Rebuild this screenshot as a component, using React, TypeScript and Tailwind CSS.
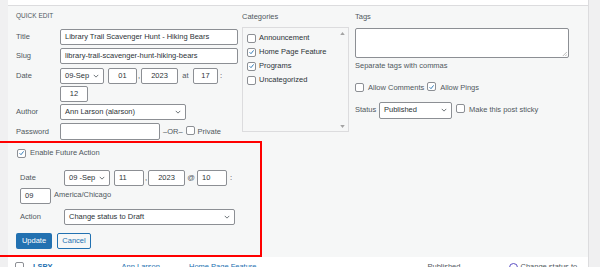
import React from 'react'

type BoxProps = { value?: string; w: string; center?: boolean; h?: string }

function Check({ checked = false }: { checked?: boolean }) {
  return (
    <span className="inline-flex h-[9px] w-[9px] shrink-0 items-center justify-center rounded-[2px] border border-[#8c8f94] bg-white">
      {checked && (
        <svg viewBox="0 0 10 10" className="h-[8px] w-[8px]">
          <path d="M2.2 5.3 L4.3 7.4 L8 2.7" fill="none" stroke="#2271b1" strokeWidth="1.3" />
        </svg>
      )}
    </span>
  )
}

function Input({ value = '', w, center = false, h = 'h-[16px]' }: BoxProps) {
  return (
    <span
      className={`${w} ${h} inline-flex shrink-0 items-center rounded-[2px] border border-[#8c8f94] bg-white px-[4px] text-[#2c3338] ${
        center ? 'justify-center' : ''
      }`}
    >
      {value}
    </span>
  )
}

function Select({ value, w, h = 'h-[16px]' }: BoxProps) {
  return (
    <span
      className={`${w} ${h} inline-flex shrink-0 items-center justify-between rounded-[2px] border border-[#8c8f94] bg-white pl-[4px] pr-[4px] text-[#2c3338]`}
    >
      <span className="whitespace-nowrap">{value}</span>
      <svg viewBox="0 0 8 5" className="h-[4px] w-[6px]">
        <path d="M1 1 L4 4 L7 1" fill="none" stroke="#50575e" strokeWidth="1.1" />
      </svg>
    </span>
  )
}

function Row({ label, children, lw = 'w-[44px]' }: { label: string; children: React.ReactNode; lw?: string }) {
  return (
    <div className="flex items-center">
      <span className={`${lw} shrink-0 text-[#50575e]`}>{label}</span>
      {children}
    </div>
  )
}

const categories: [string, boolean][] = [
  ['Announcement', false],
  ['Home Page Feature', true],
  ['Programs', true],
  ['Uncategorized', false],
]

export default function App() {
  return (
    <div className="relative h-[267px] w-[600px] overflow-hidden bg-[#f0f0f1] font-['Liberation_Sans',Arial,sans-serif] text-[7.5px] leading-[10px] text-[#2c3338]">
      <div className="ml-[8px] w-[581px] border-r border-[#dcdcde] bg-white">
        {/* previous row */}
        <div className="h-[6px] border-b border-[#dcdcde] bg-white" />

        {/* quick edit panel */}
        <div className="h-[251px] bg-[#f6f7f7] px-[8px]">
          <div className="flex items-start">
            {/* left column */}
            <div className="w-[222px] pt-[5px]">
              <div className="h-[10px] text-[6.5px] uppercase text-[#50575e]">Quick Edit</div>
              <div className="mt-[8px]">
                <Row label="Title">
                  <Input w="w-[178px]" value="Library Trail Scavenger Hunt - Hiking Bears" />
                </Row>
              </div>
              <div className="mt-[3px]">
                <Row label="Slug">
                  <Input w="w-[178px]" value="library-trail-scavenger-hunt-hiking-bears" />
                </Row>
              </div>
              <div className="mt-[4px]">
                <Row label="Date">
                  <Select w="w-[44px]" value="09-Sep" />
                  <span className="ml-[4px]">
                    <Input w="w-[29px]" value="01" center />
                  </span>
                  <span className="w-[4px] text-center">,</span>
                  <Input w="w-[37px]" value="2023" center />
                  <span className="w-[15px] text-center text-[#50575e]">at</span>
                  <Input w="w-[25px]" value="17" center />
                  <span className="ml-[2px]">:</span>
                </Row>
              </div>
              <div className="mt-[2px] pl-[44px]">
                <Input w="w-[28px]" value="12" center />
              </div>
              <div className="mt-[2px]">
                <Row label="Author">
                  <Select w="w-[126px]" value="Ann Larson (alarson)" />
                </Row>
              </div>
              <div className="mt-[3px]">
                <Row label="Password">
                  <Input w="w-[100px]" h="h-[17px]" />
                  <span className="ml-[3px] text-[#50575e]">–OR–</span>
                  <span className="ml-[3px]">
                    <Check />
                  </span>
                  <span className="ml-[3px] text-[#50575e]">Private</span>
                </Row>
              </div>
            </div>

            {/* categories */}
            <div className="ml-[4px] w-[107px] pt-[6px]">
              <div className="h-[10px] text-[#50575e]">Categories</div>
              <div className="relative mt-[5px] h-[105px] border border-[#dcdcde] bg-[#f6f7f7] pl-[4px] pt-[3px]">
                {categories.map(([name, on]) => (
                  <div key={name} className="flex h-[14px] items-center gap-[3px]">
                    <Check checked={on} />
                    <span>{name}</span>
                  </div>
                ))}
                <svg viewBox="0 0 6 4" className="absolute right-[3px] top-[4px] h-[3px] w-[5px]">
                  <path d="M0 4 L3 0 L6 4 Z" fill="#a3a3a3" />
                </svg>
                <svg viewBox="0 0 6 4" className="absolute bottom-[3px] right-[3px] h-[3px] w-[5px]">
                  <path d="M0 0 L3 4 L6 0 Z" fill="#a3a3a3" />
                </svg>
              </div>
            </div>

            {/* tags */}
            <div className="ml-[6px] w-[214px] pt-[6px]">
              <div className="h-[10px] text-[#50575e]">Tags</div>
              <div className="relative mt-[6px] h-[30px] rounded-[2px] border border-[#8c8f94] bg-white">
                <svg viewBox="0 0 6 6" className="absolute bottom-[1px] right-[1px] h-[5px] w-[5px]">
                  <path d="M6 1 L1 6 M6 4 L4 6" stroke="#9a9a9a" strokeWidth="0.8" />
                </svg>
              </div>
              <div className="mt-[3px] text-[#50575e]">Separate tags with commas</div>
              <div className="mt-[11px] flex items-center">
                <Check />
                <span className="ml-[4px] text-[#50575e]">Allow Comments</span>
                <span className="ml-[3px]">
                  <Check checked />
                </span>
                <span className="ml-[4px] text-[#50575e]">Allow Pings</span>
              </div>
              <div className="mt-[8px] flex items-center">
                <span className="w-[24px] text-[#50575e]">Status</span>
                <Select w="w-[73px]" h="h-[17px]" value="Published" />
                <span className="ml-[4px]">
                  <Check />
                </span>
                <span className="ml-[4px] text-[#50575e]">Make this post sticky</span>
              </div>
            </div>
          </div>

          {/* future action */}
          <div className="mt-[8px] pl-[1px]">
            <div className="flex h-[10px] items-center">
              <Check checked />
              <span className="ml-[4px] text-[#50575e]">Enable Future Action</span>
            </div>
          </div>
          <div className="mt-[12px] pl-[4px]">
            <Row label="Date">
              <Select w="w-[46px]" value="09 -Sep" />
              <span className="ml-[4px]">
                <Input w="w-[30px]" value="11" />
              </span>
              <span className="w-[4px] text-center">,</span>
              <Input w="w-[37px]" value="2023" center />
              <span className="w-[12px] text-center text-[#50575e]">@</span>
              <Input w="w-[30px]" value="10" />
              <span className="ml-[3px]">:</span>
            </Row>
            <div className="mt-[2px] flex items-center">
              <Input w="w-[31px]" value="09" />
              <span className="-mt-[2px] ml-[3px] text-[#50575e]">America/Chicago</span>
            </div>
            <div className="mt-[5px]">
              <Row label="Action">
                <Select w="w-[171px]" value="Change status to Draft" />
              </Row>
            </div>
          </div>
          <div className="mt-[8px] flex gap-[5px]">
            <span className="inline-flex h-[16px] w-[36px] items-center justify-center rounded-[2px] bg-[#2271b1] text-white">
              Update
            </span>
            <span className="inline-flex h-[16px] w-[34px] items-center justify-center rounded-[2px] border border-[#2271b1] bg-[#f6f7f7] text-[#2271b1]">
              Cancel
            </span>
          </div>
        </div>

        {/* next row */}
        <div className="flex h-[10px] items-start bg-white pt-[5px] text-[#50575e]">
          <span className="ml-[7px]">
            <Check />
          </span>
          <span className="ml-[9px] font-bold text-[#2271b1]">LSPY</span>
          <span className="ml-[69px] text-[#2271b1]">Ann Larson</span>
          <span className="ml-[29px] text-[#2271b1]">Home Page Feature</span>
          <span className="ml-[171px]">Published</span>
          <span className="ml-[49px] mt-[1px] h-[9px] w-[9px] rounded-full border border-[#5b4fc4]" />
          <span className="ml-[2px]">Change status to</span>
        </div>
      </div>

      {/* annotation */}
      <div className="pointer-events-none absolute left-[-4px] top-[141px] h-[116px] w-[266px] border-2 border-[#ff0000]" />
    </div>
  )
}
